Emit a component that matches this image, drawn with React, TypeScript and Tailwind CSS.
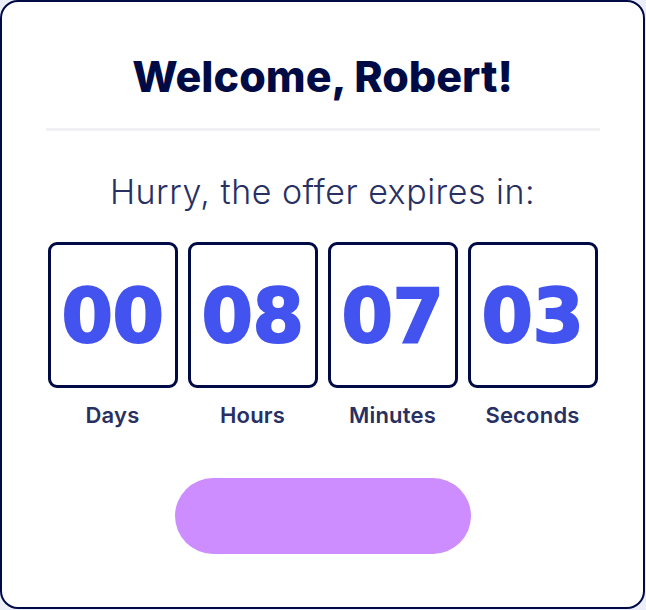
import React from "react";

const units = [
  { v: "00", l: "Days" },
  { v: "08", l: "Hours" },
  { v: "07", l: "Minutes" },
  { v: "03", l: "Seconds" },
];

export default function App() {
  return (
    <div className="w-[646px] h-[610px] bg-[#eceefa]">
      <div className="w-[645px] h-[609px] bg-white border-2 border-[#000b45] rounded-[18px] flex flex-col items-center" style={{ fontFamily: "Inter, 'Noto Sans', sans-serif" }}>
        <h1 className="mt-[46px] text-[43px] leading-[56px] font-extrabold text-[#000b45]">Welcome, Robert!</h1>
        <div className="mt-[24px] w-[554px] h-[3px] bg-[#f1f1f4]" />
        <p className="mt-[41px] text-[34px] leading-[40px] font-light text-[#283063] tracking-[0.5px]">Hurry, the offer expires in:</p>
        <div className="mt-[30px] flex gap-[10px]">
          {units.map((u) => (
            <div key={u.l} className="flex flex-col items-center">
              <div className="w-[130px] h-[146px] border-[3px] border-[#000b45] rounded-[9px] flex items-center justify-center">
                <span className="mt-[2px] text-[74px] leading-none font-bold text-[#4353ef] tracking-[-0.5px] [-webkit-text-stroke:2px_#4353ef]" style={{ fontFamily: "'DejaVu Sans', sans-serif" }}>{u.v}</span>
              </div>
              <span className="mt-[13px] text-[22px] leading-[28px] font-semibold text-[#283063] tracking-[0.2px]">{u.l}</span>
            </div>
          ))}
        </div>
        <button className="mt-[49px] w-[296px] h-[76px] rounded-full bg-[#cd8dff]" />
      </div>
    </div>
  );
}
